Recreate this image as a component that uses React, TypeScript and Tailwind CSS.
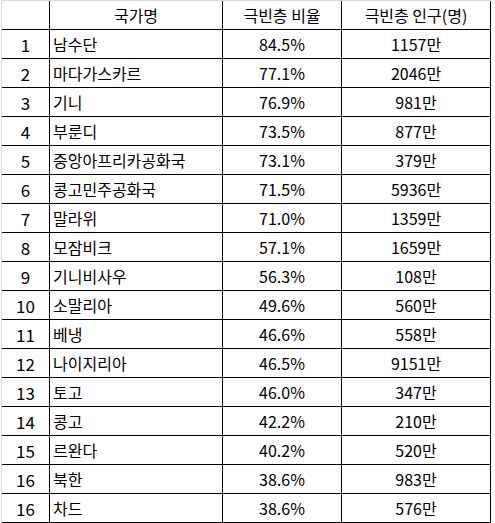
import React from 'react';

const rows: [string, string, string, string][] = [
  ['1', '남수단', '84.5%', '1157만'],
  ['2', '마다가스카르', '77.1%', '2046만'],
  ['3', '기니', '76.9%', '981만'],
  ['4', '부룬디', '73.5%', '877만'],
  ['5', '중앙아프리카공화국', '73.1%', '379만'],
  ['6', '콩고민주공화국', '71.5%', '5936만'],
  ['7', '말라위', '71.0%', '1359만'],
  ['8', '모잠비크', '57.1%', '1659만'],
  ['9', '기니비사우', '56.3%', '108만'],
  ['10', '소말리아', '49.6%', '560만'],
  ['11', '베냉', '46.6%', '558만'],
  ['12', '나이지리아', '46.5%', '9151만'],
  ['13', '토고', '46.0%', '347만'],
  ['14', '콩고', '42.2%', '210만'],
  ['15', '르완다', '40.2%', '520만'],
  ['16', '북한', '38.6%', '983만'],
  ['16', '차드', '38.6%', '576만'],
];

const cell = 'h-[29px] border-b border-r border-black flex items-center';

export default function App() {
  return (
    <div
      className="w-[495px] h-[523px] bg-white text-black text-[16px] leading-none"
      style={{ fontFamily: '"Noto Sans CJK KR", "Noto Sans", sans-serif' }}
    >
      <div className="ml-px w-[490px] border-l border-t border-[#d9d9d9]">
        <div className="grid grid-cols-[48px_173px_119px_149px]">
          <div className={cell} />
          <div className={`${cell} justify-center`}>국가명</div>
          <div className={`${cell} justify-center`}>극빈층 비율</div>
          <div className={`${cell} justify-center`}>극빈층 인구(명)</div>
          {rows.map(([rank, name, ratio, pop], i) => (
            <React.Fragment key={i}>
              <div className={`${cell} justify-center text-[17px]`}>{rank}</div>
              <div className={`${cell} pl-[3px]`}>{name}</div>
              <div className={`${cell} justify-center`}>{ratio}</div>
              <div className={`${cell} justify-center`}>{pop}</div>
            </React.Fragment>
          ))}
        </div>
      </div>
    </div>
  );
}
